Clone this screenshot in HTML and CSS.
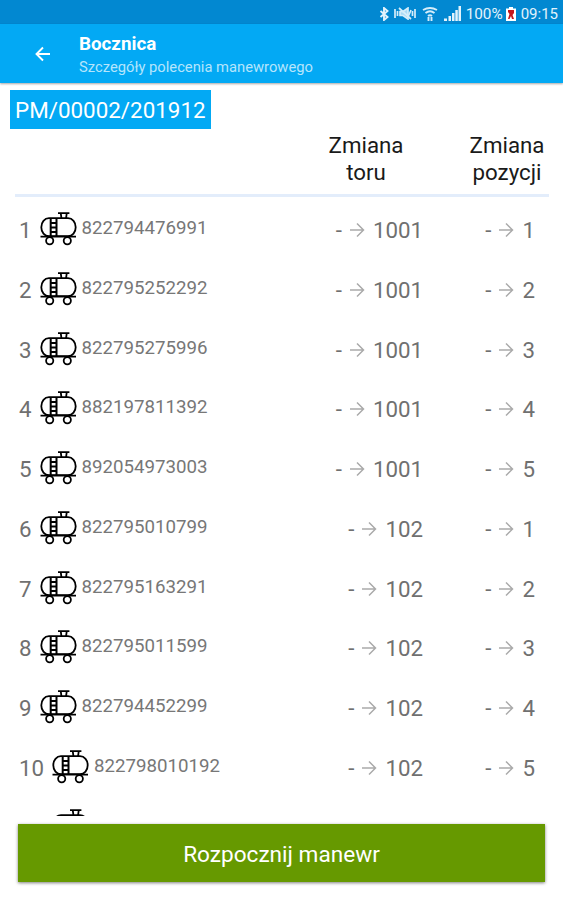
FILE: index.html
```
<!DOCTYPE html>
<html lang="pl">
<head>
  <meta charset="UTF-8">
  <title>Bocznica</title>
  <link rel="stylesheet" href="styles.css">
</head>
<body>

  <svg width="0" height="0" class="defs">
    <symbol id="wagon" viewBox="0 0 37 34">
      <g fill="none" stroke="#000" stroke-width="1.8">
        <path d="M18 1.100h11.400M20.800 1.500l.6 4.500M26.700 1.500l-.6 4.500" />
        <path d="M9 6.200h19c4.500 0 7.700 4 7.700 9s-3.200 9-7.700 9H9c-4.500 0-7.700-4-7.700-9s3.200-9 7.700-9z" />
        <path d="M10.700 6v18.500M16.500 6v18.500M10.700 11h6M10.700 15.500h6M10.700 20h6" stroke-width="2" />
        <path d="M.5 24.700h35.500" />
        <circle cx="9.700" cy="28.700" r="3.600" />
        <circle cx="27.300" cy="28.700" r="3.600" />
      </g>
    </symbol>
    <symbol id="arrow" viewBox="0 0 16 16">
      <path d="M1 8h13M8 1.500L14.500 8 8 14.500" fill="none" stroke="#aaa" stroke-width="1.500" />
    </symbol>
  </svg>

  <div class="status-bar">
    <svg class="bluetooth" width="11" height="14" viewBox="0 0 11 14" fill="none" stroke="#e3f3fc" stroke-width="1.900">
      <path d="M1.500 4l7 6L5 13V1l3.500 3-7 6" />
    </svg>
    <svg class="mute" width="22" height="13" viewBox="0 0 22 13" fill="none" stroke="#d5edfa" stroke-width="1.700">
      <path d="M1 2v9M3.500 4v5M18.500 4v5M21 2v9" />
      <path d="M6 4.500h3l5-3.500v11L9 8.500H6z" fill="#a9daf5" />
      <path d="M5 1l12 11M17 3l-3 7" />
    </svg>
    <svg class="wifi" width="16" height="14" viewBox="0 0 16 14" fill="none" stroke="#d5edfa" stroke-width="1.900">
      <path d="M1 3q7-4 14 0M3.500 6q4.500-3.500 9 0M6 9q2-1.500 4 0M6.500 10v4M9.500 10v4" />
    </svg>
    <svg class="signal" width="17" height="15" viewBox="0 0 17 15" fill="#e3f3fc">
      <path d="M0 12.500h3V15H0zM4.500 10h2.500v5H4.500zM8 7h2.500v8H8zM11.300 4h2.500v11h-2.500zM14.500 0H17v15h-2.500z" />
    </svg>
    <span class="percent">100%</span>
    <svg class="battery" width="10" height="14" viewBox="0 0 10 14">
      <path d="M3 0h4v1.500h3V14H0V1.500h3z" fill="#fff" />
      <path d="M2 3h6v3L6.500 8 8 12H6L5 9l-1.500 3H2l1.500-5L2 5z" fill="#c4161c" />
    </svg>
    <span class="time">09:15</span>
  </div>

  <header class="app-bar">
    <svg class="back" width="16" height="16" viewBox="0 0 16 16" fill="none" stroke="#fff" stroke-width="1.900">
      <path d="M15 8H2M8 1.500L1.500 8 8 14.500" />
    </svg>
    <div>
      <h1>Bocznica</h1>
      <p>Szczegóły polecenia manewrowego</p>
    </div>
  </header>

  <main>
    <div class="order-number">PM/00002/201912</div>
    <div class="table-head">
      <span class="head-track">Zmiana<br>toru</span>
      <span class="head-position">Zmiana<br>pozycji</span>
    </div>
    <div class="wagons" id="wagons"></div>
    <button class="start">Rozpocznij manewr</button>
  </main>

  <script>
    // [wagon number, new track, new position]
    const wagons = [
      ["822794476991", 1001, 1],
      ["822795252292", 1001, 2],
      ["822795275996", 1001, 3],
      ["882197811392", 1001, 4],
      ["892054973003", 1001, 5],
      ["822795010799", 102, 1],
      ["822795163291", 102, 2],
      ["822795011599", 102, 3],
      ["822794452299", 102, 4],
      ["822798010192", 102, 5]
    ];

    function change(value, name) {
      return `<span class="change ${name}">-<svg class="arrow"><use href="#arrow"/></svg>${value}</span>`;
    }

    const rows = wagons.map(([number, track, position], i) => `
      <div class="row">
        <span class="index">${i + 1}</span>
        <svg class="wagon"><use href="#wagon"/></svg>
        <span class="number">${number}</span>
        ${change(track, "track")}
        ${change(position, "position")}
      </div>`);

    // only the top of the next wagon fits above the button
    rows.push(`<div class="row next"><svg class="wagon"><use href="#wagon"/></svg></div>`);

    document.getElementById("wagons").innerHTML = rows.join("");
  </script>

</body>
</html>
```
FILE: styles.css
```
* {
  box-sizing: border-box;
}

body {
  margin: 0;
  height: 900px;
  font-family: Roboto, sans-serif;
  background: #fff;
  overflow: hidden;
}

.defs {
  display: block;
}

.status-bar {
  display: flex;
  align-items: center;
  justify-content: flex-end;
  height: 24px;
  padding: 3px 5px 0 0;
  background: #0288d1;
  color: #e3f3fc;
  font-size: 15.5px;
  line-height: 20px;
}

.mute {
  margin-left: 4px;
}

.wifi {
  margin-left: 6px;
}

.signal {
  margin-left: 6px;
}

.percent {
  margin-left: 5px;
  font-size: 15.3px;
}

.battery {
  margin: 0 5px 0 3px;
}

.time {
  font-size: 15px;
}

.app-bar {
  display: flex;
  height: 59px;
  padding-left: 35px;
  background: #03a9f4;
  box-shadow: 0 1px 2px rgba(0, 0, 0, 0.35);
  color: #fff;
}

.back {
  margin: 22px 28px 0 0;
}

h1 {
  margin: 8px 0 0;
  font-size: 18.8px;
  font-weight: 700;
  line-height: 24px;
}

.app-bar p {
  margin: 2px 0 0;
  font-size: 14.75px;
  line-height: 18px;
  color: #b5e5fc;
}

main {
  padding-top: 7px;
}

.order-number {
  width: 201px;
  height: 39px;
  margin-left: 10px;
  padding-left: 5px;
  background: #03a9f4;
  color: #fff;
  font-size: 22.4px;
  line-height: 41px;
  white-space: nowrap;
}

.table-head {
  display: flex;
  justify-content: flex-end;
  height: 68px;
  margin: 0 14px 0 15px;
  padding-top: 3px;
  border-bottom: 3px solid #e3edfb;
  color: #1a1a1a;
  font-size: 22.3px;
  line-height: 27px;
  text-align: center;
}

.head-track {
  width: 80px;
  margin-right: 61px;
}

.head-position {
  width: 80px;
  margin-right: 2px;
}

.wagons {
  height: 619px;
  padding-top: 2px;
  overflow: hidden;
}

.row {
  display: flex;
  height: 59.75px;
  padding: 0 28px 0 19px;
  color: #707070;
  font-size: 22.3px;
}

.next {
  padding-left: 44px;
}

.index {
  line-height: 63px;
}

.wagon {
  width: 37px;
  height: 34px;
  margin: 13px 5px 0 8px;
}

.next .wagon {
  margin-top: 12px;
}

.number {
  color: #777;
  font-size: 18.7px;
  line-height: 59px;
}

.change {
  line-height: 63px;
  text-align: right;
}

.track {
  flex: 1;
}

.position {
  width: 112px;
}

.arrow {
  width: 16px;
  height: 16px;
  margin: 0 8px 0 7px;
}

.start {
  display: block;
  width: 527px;
  height: 58px;
  margin: 8px 0 0 18px;
  padding: 2px 0 0;
  border: none;
  background: #669900;
  box-shadow: 0 1px 3px rgba(0, 0, 0, 0.5);
  color: #fff;
  font-family: inherit;
  font-size: 22.6px;
}
```
